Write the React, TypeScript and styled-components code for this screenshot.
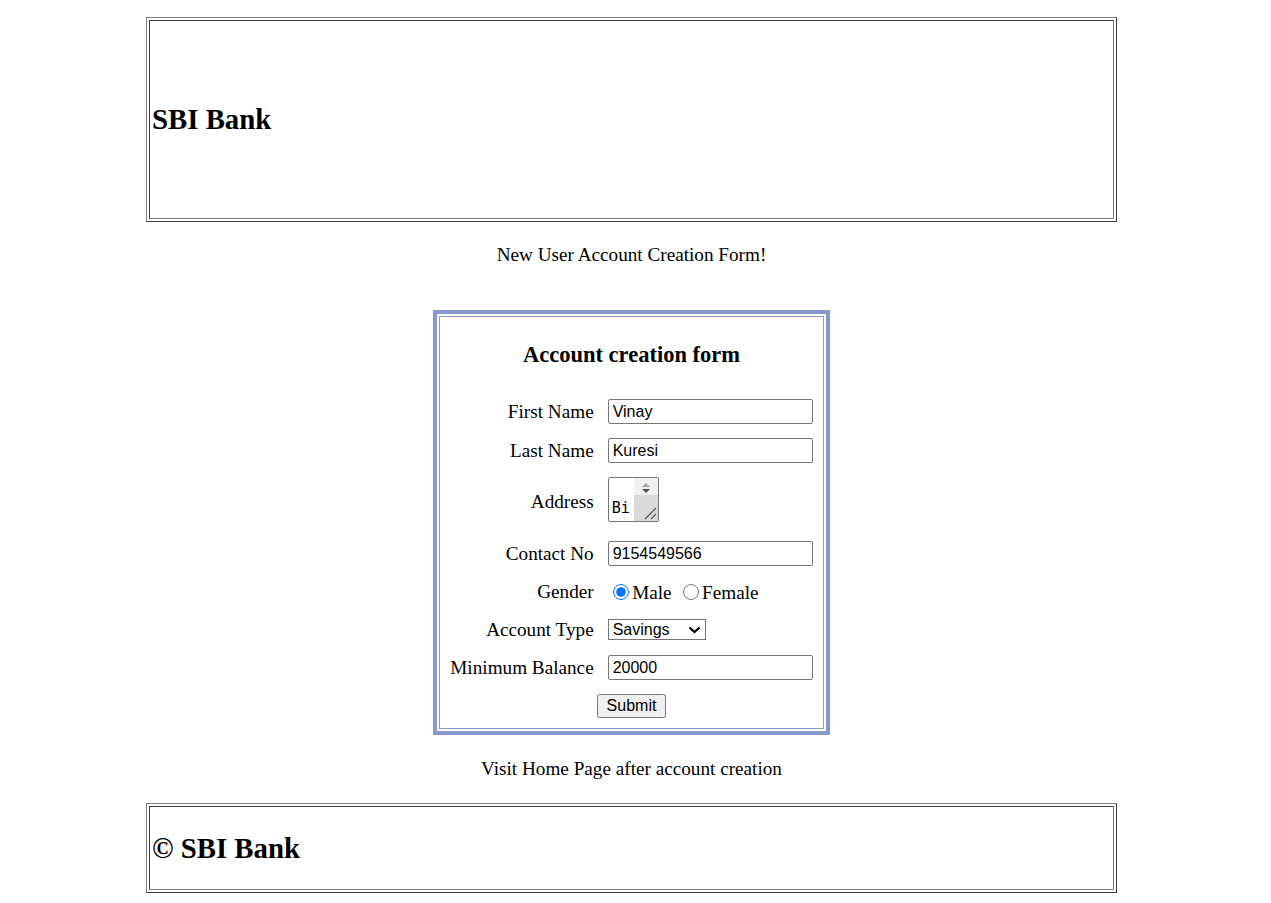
import React from "react";
import styled, { createGlobalStyle } from "styled-components";

const GlobalStyle = createGlobalStyle`
  html, body {
    margin: 0;
    padding: 0;
    background: #ffffff;
  }
  body {
    font-family: "Liberation Serif", "Times New Roman", serif;
    color: #000000;
  }
`;

const Page = styled.div`
  width: 1263px;
  padding-top: 17px;
  display: flex;
  flex-direction: column;
  align-items: center;
`;

const FrameTable = styled.div`
  width: 971px;
  box-sizing: border-box;
  padding: 2px;
  border: 1px solid;
  border-color: #808080 #3d3d3d #3d3d3d #808080;
`;

const FrameCell = styled.div<{ $height: number }>`
  height: ${(p) => p.$height}px;
  box-sizing: border-box;
  border: 1px solid;
  border-color: #3d3d3d #808080 #808080 #3d3d3d;
  display: flex;
  align-items: center;
  padding: 0 2px;
`;

const BankTitle = styled.h2`
  margin: 0;
  font-size: 28.8px;
  font-weight: bold;
  line-height: 33px;
`;

const Notice = styled.p<{ $top: number; $bottom: number }>`
  margin: ${(p) => p.$top}px 0 ${(p) => p.$bottom}px;
  font-size: 19.2px;
  line-height: 22px;
  text-align: center;
`;

const FormCard = styled.form`
  width: 397px;
  box-sizing: border-box;
  border: 4px solid #8798cc;
  padding: 2px;
`;

const FormInner = styled.div`
  border: 1px solid #8798cc;
  padding: 0 0 10px;
`;

const FormHeading = styled.h3`
  margin: 25px 0 0;
  font-size: 22.5px;
  line-height: 26px;
  font-weight: bold;
  text-align: center;
`;

const FormGrid = styled.div`
  margin-top: 31px;
  display: grid;
  grid-template-columns: max-content max-content;
  justify-content: center;
  align-items: center;
  column-gap: 14px;
  row-gap: 14px;
`;

const FieldLabel = styled.label`
  font-size: 19.2px;
  line-height: 22px;
  text-align: right;
`;

const TextInput = styled.input`
  width: 205px;
  height: 25px;
  box-sizing: border-box;
  border: 1px solid #767676;
  border-radius: 2px;
  padding: 1px 4px;
  font-family: "Liberation Sans", Arial, sans-serif;
  font-size: 16px;
  color: #000;
  background: #fff;
  outline: none;
`;

const AddressBox = styled.div`
  width: 51px;
  height: 45px;
  margin-bottom: 5px;
  box-sizing: border-box;
  border: 1px solid #767676;
  border-radius: 2px;
  display: flex;
  overflow: hidden;
  background: #fff;
`;

const AddressArea = styled.textarea`
  flex: 1;
  min-width: 0;
  border: none;
  outline: none;
  resize: none;
  overflow: hidden;
  padding: 21px 0 0 3px;
  margin: 0;
  font-family: "DejaVu Sans Mono", "Liberation Mono", monospace;
  font-size: 15px;
  line-height: 18px;
  color: #000;
  background: #fff;
`;

const ScrollSvg = styled.svg`
  flex: none;
  display: block;
`;

const GenderGroup = styled.div`
  height: 24px;
  display: flex;
  align-items: center;
  font-size: 19.2px;
  line-height: 22px;
`;

const Radio = styled.input`
  width: 16px;
  height: 16px;
  margin: 0 3.5px 0 5px;
  flex: none;
`;

const OptionText = styled.span<{ $gap: number }>`
  margin-right: ${(p) => p.$gap}px;
  padding-top: 2px;
`;

const SelectWrap = styled.div`
  position: relative;
  width: 98px;
  height: 21px;
  margin: 1px 0;
`;

const Select = styled.select`
  appearance: none;
  width: 100%;
  height: 100%;
  box-sizing: border-box;
  border: 1px solid #767676;
  border-radius: 0;
  padding: 0 0 0 4px;
  font-family: "Liberation Sans", Arial, sans-serif;
  font-size: 16px;
  color: #000;
  background: #fff;
  outline: none;
`;

const Chevron = styled.svg`
  position: absolute;
  right: 5px;
  top: 7px;
  pointer-events: none;
`;

const SubmitButton = styled.button`
  grid-column: 1 / -1;
  justify-self: center;
  width: 69px;
  height: 24px;
  box-sizing: border-box;
  border: 1px solid #767676;
  border-radius: 2.5px;
  background: #efefef;
  font-family: "Liberation Sans", Arial, sans-serif;
  font-size: 16px;
  color: #000;
  padding: 0;
`;

export default function App() {
  return (
    <>
      <GlobalStyle />
      <Page>
        <FrameTable>
          <FrameCell $height={199}>
            <BankTitle>SBI Bank</BankTitle>
          </FrameCell>
        </FrameTable>

        <Notice $top={22} $bottom={44}>New User Account Creation Form!</Notice>

        <FormCard onSubmit={(e) => e.preventDefault()}>
          <FormInner>
            <FormHeading>Account creation form</FormHeading>
            <FormGrid>
              <FieldLabel htmlFor="fn">First Name</FieldLabel>
              <TextInput id="fn" type="text" defaultValue="Vinay" />

              <FieldLabel htmlFor="ln">Last Name</FieldLabel>
              <TextInput id="ln" type="text" defaultValue="Kuresi" />

              <FieldLabel htmlFor="addr">Address</FieldLabel>
              <AddressBox>
                <AddressArea id="addr" defaultValue="Bi" />
                <ScrollSvg width="24" height="43" viewBox="0 0 24 43">
                  <rect x="0" y="0" width="24" height="17" fill="#f0f0f0" />
                  <polygon points="8,9 16,9 12,5" fill="#a3a3a3" />
                  <polygon points="8,11 16,11 12,15" fill="#505050" />
                  <rect x="0" y="17" width="24" height="26" fill="#dadada" />
                  <line x1="11" y1="41" x2="22" y2="30" stroke="#555" strokeWidth="1.2" />
                  <line x1="17" y1="41" x2="22" y2="36" stroke="#555" strokeWidth="1.2" />
                </ScrollSvg>
              </AddressBox>

              <FieldLabel htmlFor="cn">Contact No</FieldLabel>
              <TextInput id="cn" type="text" defaultValue="9154549566" />

              <FieldLabel>Gender</FieldLabel>
              <GenderGroup>
                <Radio type="radio" name="gender" defaultChecked />
                <OptionText $gap={6}>Male</OptionText>
                <Radio type="radio" name="gender" />
                <OptionText $gap={0}>Female</OptionText>
              </GenderGroup>

              <FieldLabel htmlFor="at">Account Type</FieldLabel>
              <SelectWrap>
                <Select id="at" defaultValue="Savings">
                  <option>Savings</option>
                  <option>Current</option>
                </Select>
                <Chevron width="13" height="8" viewBox="0 0 13 8">
                  <polyline points="1.5,1.5 6.5,6 11.5,1.5" fill="none" stroke="#000" strokeWidth="2.2" />
                </Chevron>
              </SelectWrap>

              <FieldLabel htmlFor="mb">Minimum Balance</FieldLabel>
              <TextInput id="mb" type="text" defaultValue="20000" />

              <SubmitButton type="submit">Submit</SubmitButton>
            </FormGrid>
          </FormInner>
        </FormCard>

        <Notice $top={23} $bottom={23}>Visit Home Page after account creation</Notice>

        <FrameTable>
          <FrameCell $height={84}>
            <BankTitle>© SBI Bank</BankTitle>
          </FrameCell>
        </FrameTable>
      </Page>
    </>
  );
}
